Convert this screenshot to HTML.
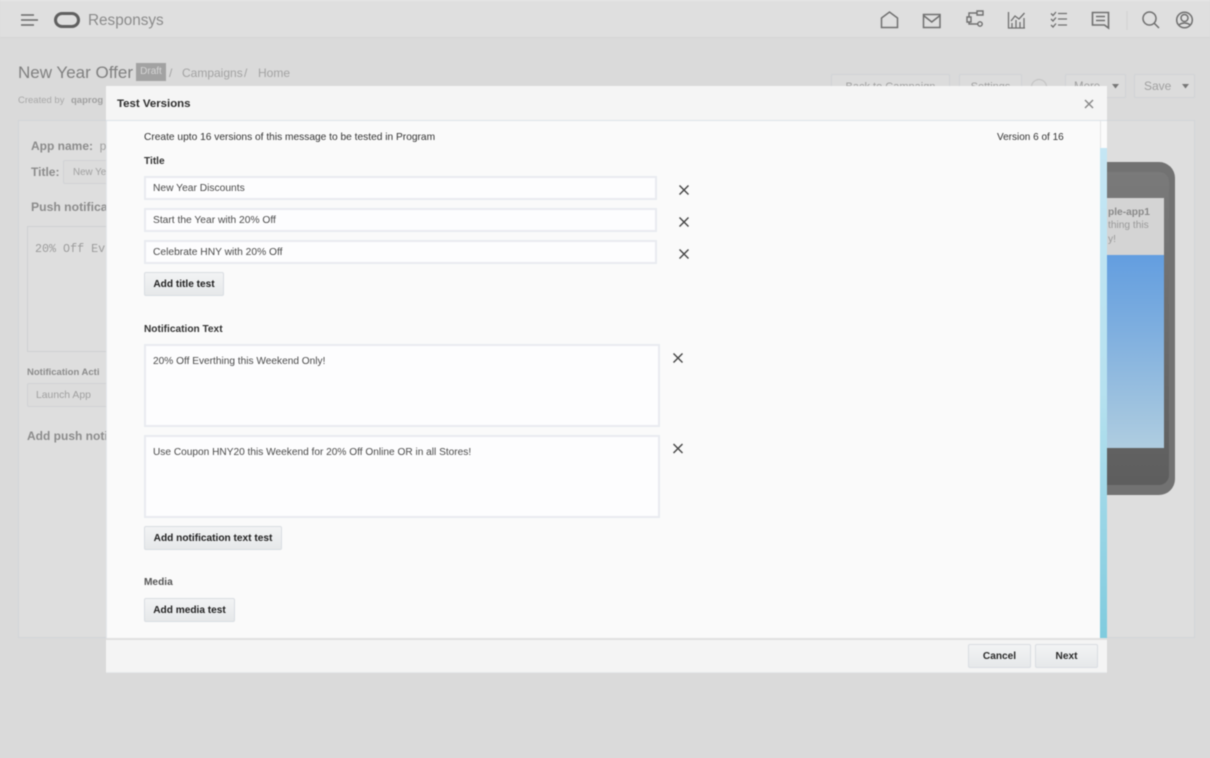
<!DOCTYPE html>
<html><head><meta charset="utf-8"><title>Test Versions</title>
<style>
html,body{margin:0;padding:0;width:1210px;height:758px;overflow:hidden;background:#dadada}
body{font-family:"Liberation Sans",Arial,sans-serif;position:relative}
#w{position:absolute;left:0;top:0;width:1210px;height:758px;filter:blur(.45px);overflow:hidden}
.a{position:absolute;white-space:nowrap;box-sizing:border-box}
.i{background:#fdfdfe;border:2px solid #e9ebf0;font-size:10.25px;color:#4a4a4a;padding-left:7px}
.b{background:linear-gradient(#f2f3f4,#e6e8ea);border:1px solid #d9dde2;border-radius:2px;font-size:10.15px;font-weight:bold;color:#222;text-align:center;line-height:24px;height:24px}
.l{font-size:10.15px;font-weight:bold;color:#333}
.g{color:#a3a3a3;font-size:12px;line-height:15px}
.gb{color:#8c8c8c;font-weight:bold}
.o{background:#dcdcdc;border:1px solid #d0d2d5;border-radius:2px;color:#a0a0a0}
svg{position:absolute;overflow:visible}
</style></head><body><div id="w">
<div class="a" style="left:0;top:0;width:1210px;height:38px;background:#dfdfdf;border-top:1px solid #e8e8e8;border-bottom:1px solid #d6d6d6"></div>
<svg style="left:21px;top:13px" width="20" height="14" fill="none" stroke="#6b6b6b" stroke-width="1.6"><path d="M0 2H13M0 7H17M0 12H13"/></svg>
<svg style="left:53px;top:11px" width="28" height="18" fill="none" stroke="#606060" stroke-width="3"><rect x="2.500" y="2.500" width="23" height="13" rx="6.500"/></svg>
<div class="a" style="left:88px;top:11px;font-size:15.3px;color:#8b8b8b;line-height:20px">Responsys</div>

<svg style="left:880px;top:10px" width="320" height="20" fill="none" stroke="#707070" stroke-width="1.500">
<path d="M1.500 17.500V8L9.500 2L17.500 8V17.500Z"/>
<path d="M43.500 4.500H60V17.500H43.500ZM43.500 5.500L51.750 12L60 5.500"/>
<path d="M87 7H91V12H87ZM89 7V3H97M89 12V14H97.500M97 1H103V5H97Z" stroke-width="1.400"/><circle cx="100" cy="14" r="2.200" stroke-width="1.400"/>
<path d="M128.500 2V18H145M131 11L135 6L139 9L144.500 3M132 18V13M136 18V10M140 18V12M144 18V8" stroke-width="1.300"/>
<path d="M178 3.500H187M178 9H187M178 15H187M171 3.500L173 5.500L176 2M171 9L173 11L176 7.500M171 15L173 17L176 13.500" stroke-width="1.300"/>
<path d="M212.500 2.500H228.500V18L224.500 15H212.500ZM216 6.500H225M216 10.500H225" stroke-width="1.600"/>
<path d="M247 1V20" stroke="#d2d2d2" stroke-width="1"/>
<circle cx="269.500" cy="8.500" r="6.500"/><path d="M274 13L279 18"/>
<circle cx="304.500" cy="10" r="7.800"/><circle cx="304.500" cy="8" r="3.500"/><path d="M298.500 15Q304.500 11 310.500 15"/>
</svg>

<div class="a" style="left:18px;top:62px;font-size:17px;color:#808080;line-height:22px">New Year Offer</div>
<div class="a" style="left:136px;top:63px;width:30px;height:18px;background:#a2a2a2;color:#d5d5d5;font-size:10px;text-align:center;line-height:18px">Draft</div>
<div class="a g" style="left:169px;top:66px">/</div>
<div class="a g" style="left:182px;top:66px">Campaigns</div>
<div class="a g" style="left:244px;top:66px">/</div>
<div class="a g" style="left:258px;top:66px">Home</div>
<div class="a" style="left:18px;top:94px;font-size:9.500px;color:#a8a8a8;line-height:13px">Created by</div>
<div class="a" style="left:71px;top:94px;font-size:9.500px;color:#a0a0a0;line-height:13px;font-weight:bold">qaprog</div>

<div class="a o" style="left:831px;top:74px;width:119px;height:24px;font-size:11px;line-height:24px;text-align:center">Back to Campaign</div>
<div class="a o" style="left:959px;top:74px;width:63px;height:24px;font-size:11px;line-height:24px;text-align:center">Settings</div>
<svg style="left:1030px;top:78px" width="18" height="18" fill="none" stroke="#c0c0c0"><circle cx="9" cy="9" r="7.500"/></svg>
<div class="a o" style="left:1065px;top:74px;width:61px;height:24px;font-size:11.500px;line-height:24px;padding-left:8px">More</div>
<div class="a o" style="left:1134px;top:74px;width:61px;height:24px;font-size:12px;line-height:23px;padding-left:9px">Save</div>
<svg style="left:1112px;top:84px" width="80" height="6" fill="#777"><path d="M0 0H7L3.500 4.500ZM70 0H77L73.500 4.500Z"/></svg>

<div class="a" style="left:18px;top:120px;width:1177px;height:518px;background:#dedede;border:1px solid #d2d4d8"></div>
<div class="a gb" style="left:31px;top:139px;font-size:12px;line-height:14px">App name: <span style="font-weight:normal;color:#a0a0a0">&nbsp;p</span></div>
<div class="a gb" style="left:31px;top:165px;font-size:12px;line-height:14px">Title:</div>
<div class="a o" style="left:63px;top:160px;width:50px;height:24px;font-size:9.800px;line-height:23px;padding-left:9px">New Ye</div>
<div class="a gb" style="left:31px;top:200px;font-size:12.200px;line-height:14px">Push notifica</div>
<div class="a" style="left:27px;top:226px;width:90px;height:126px;border:1px solid #cfd0d2"></div>
<div class="a" style="left:35px;top:242px;font-family:'Liberation Mono',monospace;font-size:11.700px;line-height:14px;color:#9c9c9c">20% Off Ev</div>
<div class="a gb" style="left:27px;top:367px;font-size:9.500px;line-height:12px">Notification Acti</div>
<div class="a o" style="left:27px;top:383px;width:90px;height:24px;font-size:10.400px;line-height:23px;padding-left:8px">Launch App</div>
<div class="a gb" style="left:27px;top:429px;font-size:12px;line-height:14px">Add push noti</div>

<div class="a" style="left:1100px;top:162px;width:75px;height:333px;background:#727272;border-radius:0 16px 16px 0"></div>
<div class="a" style="left:1100px;top:172px;width:69px;height:313px;background:linear-gradient(#7a7a7a,#6c6c6c 50%,#5e5e5e);border-radius:0 10px 10px 0"></div>
<div class="a" style="left:1100px;top:198px;width:64px;height:57px;background:#d4d4d4"></div>
<div class="a" style="left:1100px;top:255px;width:64px;height:193px;background:linear-gradient(#639ee0,#7fafdf 40%,#afcde0)"></div>
<div class="a" style="left:1108px;top:206px;font-size:10.200px;line-height:14px;font-weight:bold;color:#8a8a8a">ple-app1</div>
<div class="a" style="left:1108px;top:219px;font-size:10.200px;line-height:14px;color:#9a9a9a">thing this</div>
<div class="a" style="left:1108px;top:233px;font-size:10.200px;line-height:14px;color:#9a9a9a">y!</div>

<!-- modal -->
<div class="a" style="left:106px;top:86px;width:1001px;height:587px;background:#fafafa;border:1px solid #e4e8ec;border-top:none"></div>
<div class="a" style="left:106px;top:86px;width:1001px;height:35px;background:#f5f5f5;border-bottom:1px solid #dde3e9"></div>
<div class="a" style="left:117px;top:97px;font-size:11.450px;font-weight:bold;color:#2e2e2e;line-height:14px">Test Versions</div>
<svg style="left:1085px;top:100px" width="8" height="8" stroke="#8a8a8a" stroke-width="1.500"><path d="M0 0L8 8M8 0L0 8"/></svg>
<div class="a" style="left:1100px;top:121px;width:7px;height:28px;background:#fbfbfb;border-left:1px solid #e6e6e6"></div>
<div class="a" style="left:1100px;top:148px;width:7px;height:491px;background:linear-gradient(#c5e6f4,#b6e1ef 50%,#7fcbde)"></div>
<div class="a" style="left:106px;top:638px;width:1001px;height:35px;background:#f4f4f4;border-top:2px solid #e0e0e0;border-bottom:1px solid #e6e8ea"></div>

<div class="a" style="left:144px;top:131px;font-size:10.200px;color:#333;line-height:13px">Create upto 16 versions of this message to be tested in Program</div>
<div class="a" style="left:997px;top:131px;font-size:10px;color:#333;line-height:13px">Version 6 of 16</div>
<div class="a l" style="left:144px;top:155px;line-height:13px">Title</div>

<div class="a i" style="left:144px;top:176px;width:513px;height:24px;line-height:22px">New Year Discounts</div>
<div class="a i" style="left:144px;top:208px;width:513px;height:24px;line-height:22px">Start the Year with 20% Off</div>
<div class="a i" style="left:144px;top:240px;width:513px;height:24px;line-height:22px">Celebrate HNY with 20% Off</div>
<svg style="left:679px;top:185px" width="10" height="75" stroke="#444" stroke-width="1.400"><path d="M.5 .5L9.500 9.500M9.500 .5L.5 9.500M.5 32.500L9.500 41.500M9.500 32.500L.5 41.500M.5 64.500L9.500 73.500M9.500 64.500L.5 73.500"/></svg>
<div class="a b" style="left:144px;top:272px;width:80px">Add title test</div>

<div class="a l" style="left:144px;top:323px;line-height:13px">Notification Text</div>
<div class="a i" style="left:144px;top:344px;width:516px;height:83px;padding-top:8.500px;line-height:13px;font-size:10.150px">20% Off Everthing this Weekend Only!</div>
<div class="a i" style="left:144px;top:435px;width:516px;height:83px;padding-top:8.500px;line-height:13px;font-size:10.150px">Use Coupon HNY20 this Weekend for 20% Off Online OR in all Stores!</div>
<svg style="left:673px;top:353px" width="10" height="100" stroke="#444" stroke-width="1.400"><path d="M.5 .5L9.500 9.500M9.500 .5L.5 9.500M.5 91L9.500 100M9.500 91L.5 100"/></svg>
<div class="a b" style="left:144px;top:526px;width:138px">Add notification text test</div>

<div class="a" style="left:144px;top:576px;font-size:10.150px;font-weight:bold;color:#555;line-height:13px">Media</div>
<div class="a b" style="left:144px;top:598px;width:91px">Add media test</div>

<div class="a b" style="left:968px;top:644px;width:63px;color:#2a2a2a">Cancel</div>
<div class="a b" style="left:1035px;top:644px;width:63px;color:#2a2a2a">Next</div>
</div></body></html>
